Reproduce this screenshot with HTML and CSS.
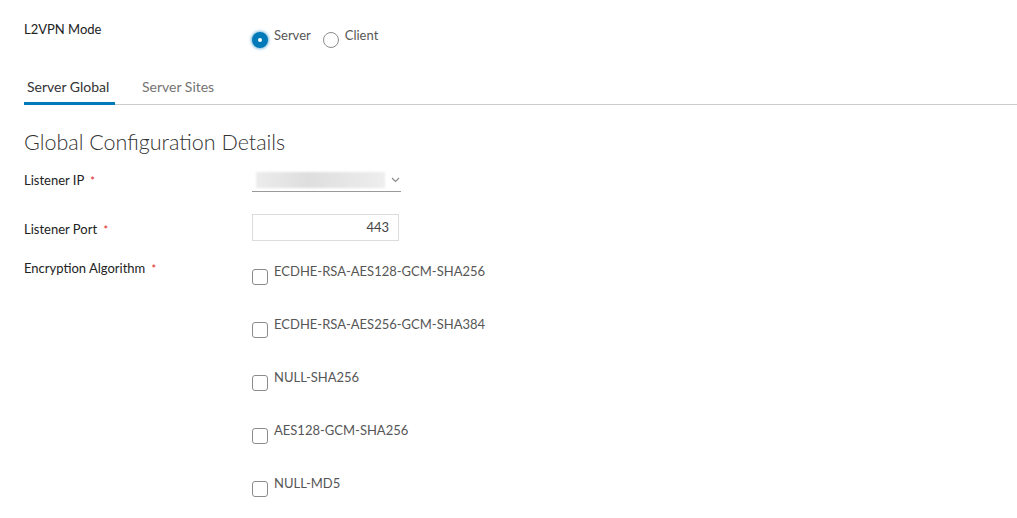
FILE: index.html
```html
<!DOCTYPE html>
<html>
<head>
<meta charset="utf-8">
<link rel="stylesheet" href="styles.css">
</head>
<body>
<div class="page">
  <div class="mode-row">
    <div class="mode-label">L2VPN Mode</div>
    <div class="radios">
      <label class="radio"><span class="radio-dot checked"></span><span class="radio-text">Server</span></label>
      <label class="radio"><span class="radio-dot"></span><span class="radio-text">Client</span></label>
    </div>
  </div>
  <div class="tabs">
    <div class="tab active">Server Global</div>
    <div class="tab">Server Sites</div>
  </div>
  <h2 class="heading">Global Configuration Details</h2>
  <div class="form-row row-ip">
    <div class="label">Listener IP <span class="req">*</span></div>
    <div class="select">
      <span class="blur"></span>
      <svg class="chev" width="9" height="6" viewBox="0 0 9 6"><path d="M1 1 L4.5 4.5 L8 1" fill="none" stroke="#8a8a8a" stroke-width="1.1"/></svg>
    </div>
  </div>
  <div class="form-row row-port">
    <div class="label">Listener Port <span class="req">*</span></div>
    <div class="input">443</div>
  </div>
  <div class="form-row row-enc">
    <div class="label">Encryption Algorithm <span class="req">*</span></div>
    <div class="checks">
      <div class="check"><span class="box"></span><span class="check-text">ECDHE-RSA-AES128-GCM-SHA256</span></div>
      <div class="check"><span class="box"></span><span class="check-text">ECDHE-RSA-AES256-GCM-SHA384</span></div>
      <div class="check"><span class="box"></span><span class="check-text">NULL-SHA256</span></div>
      <div class="check"><span class="box"></span><span class="check-text">AES128-GCM-SHA256</span></div>
      <div class="check"><span class="box"></span><span class="check-text">NULL-MD5</span></div>
    </div>
  </div>
</div>
</body>
</html>
```
FILE: styles.css
```css
* { box-sizing: border-box; }
html, body { margin: 0; padding: 0; background: #fff; }
body {
  font-family: "Lato", "Open Sans", "Liberation Sans", sans-serif;
  font-size: 13px;
  color: #313131;
  width: 1017px;
  height: 518px;
  overflow: hidden;
}
.page { padding-left: 24px; }

.mode-row { display: flex; height: 60px; }
.mode-label { width: 228px; padding-top: 22px; font-size: 13px; line-height: 14px; color: #222; }
.radios { display: flex; padding-top: 28px; }
.radio { display: flex; align-items: flex-start; margin-right: 12px; }
.radio-dot {
  width: 16px; height: 16px; border-radius: 50%;
  border: 1px solid #8c8c8c; margin-top: 4px; background: #fff;
  position: relative; flex: none;
}
.radio-dot.checked {
  border: none; background: #0079b8;
  box-shadow: 0 0 3px 1px rgba(0,121,184,0.55);
}
.radio-dot.checked::after {
  content: ""; position: absolute; left: 6px; top: 6px;
  width: 4px; height: 4px; border-radius: 50%; background: #fff;
}
.radio-text { margin-left: 6px; font-size: 13px; line-height: 14px; color: #565656; }

.tabs { display: flex; height: 45px; border-bottom: 1px solid #cccccc; }
.tab {
  padding: 20px 3px 0 3px; margin-right: 24px; font-size: 14px; line-height: 14px; color: #747474;
}
.tab.active {
  color: #333; width: 91px; margin-right: 24px; margin-bottom: -1px;
  border-bottom: 3px solid #0079b8;
}

.heading {
  margin: 0; padding-top: 25px; font-size: 21.5px; font-weight: 300; line-height: 24px; color: #333;
  height: 64px;
}

.form-row { display: flex; }
.label { width: 228px; font-size: 13px; line-height: 14px; color: #222; }
.req { color: #e02020; margin-left: 3px; font-size: 11px; }

.row-ip { height: 45px; }
.row-ip .label { padding-top: 4px; }
.select {
  width: 149px; height: 23px; border-bottom: 1px solid #9a9a9a;
  display: flex; align-items: center; padding-left: 4px; margin-top: 0;
}
.blur { width: 129px; height: 16px; background: linear-gradient(90deg, #ececec, #dedede 40%, #e6e6e6 70%, #eeeeee); filter: blur(1px); }
.chev { margin-left: 6px; }

.row-port { height: 40px; }
.row-port .label { padding-top: 8px; }
.input {
  width: 147px; height: 27px; border: 1px solid #dcdcdc; text-align: right; padding-right: 9px;
  line-height: 25px; font-size: 13px; color: #444;
}

.row-enc .label { padding-top: 7px; }
.checks { display: flex; flex-direction: column; padding-top: 15px; }
.check { display: flex; align-items: flex-start; height: 53px; }
.box { width: 16px; height: 16px; border: 1px solid #8c8c8c; border-radius: 3px; flex: none; }
.check-text { margin-left: 6px; font-size: 13px; line-height: 14px; color: #565656; position: relative; top: -5px; }
```
